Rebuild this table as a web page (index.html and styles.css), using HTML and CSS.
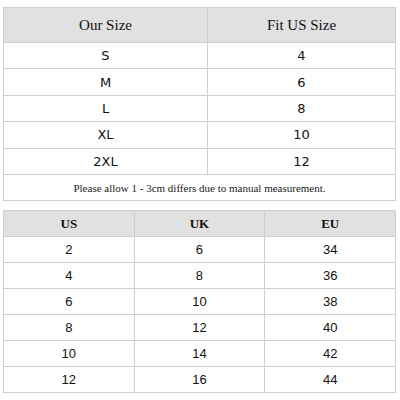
FILE: index.html
```html
<!DOCTYPE html>
<html>
<head>
<meta charset="utf-8">
<link rel="stylesheet" href="styles.css">
</head>
<body>
<div class="page">
  <table class="size-table first">
    <colgroup><col class="c1"><col></colgroup>
    <thead>
      <tr><th>Our Size</th><th>Fit US Size</th></tr>
    </thead>
    <tbody>
      <tr><td>S</td><td>4</td></tr>
      <tr><td>M</td><td>6</td></tr>
      <tr><td>L</td><td>8</td></tr>
      <tr><td>XL</td><td>10</td></tr>
      <tr><td>2XL</td><td>12</td></tr>
      <tr><td class="note" colspan="2">Please allow 1 - 3cm differs due to manual measurement.</td></tr>
    </tbody>
  </table>
  <table class="size-table second">
    <colgroup><col class="t"><col class="t"><col class="t"></colgroup>
    <thead>
      <tr><th>US</th><th>UK</th><th>EU</th></tr>
    </thead>
    <tbody>
      <tr><td>2</td><td>6</td><td>34</td></tr>
      <tr><td>4</td><td>8</td><td>36</td></tr>
      <tr><td>6</td><td>10</td><td>38</td></tr>
      <tr><td>8</td><td>12</td><td>40</td></tr>
      <tr><td>10</td><td>14</td><td>42</td></tr>
      <tr><td>12</td><td>16</td><td>44</td></tr>
    </tbody>
  </table>
</div>
</body>
</html>
```

FILE: styles.css
```css
html, body {
  margin: 0;
  padding: 0;
  background: #ffffff;
}

.page {
  padding: 7px 4px 0 3px;
  display: flex;
  flex-direction: column;
  gap: 9px;
}

.size-table {
  width: 393px;
  border-collapse: collapse;
  table-layout: fixed;
  color: #111;
}

.size-table th,
.size-table td {
  border: 1px solid #cfcfcf;
  text-align: center;
  padding: 0;
}

.size-table th {
  background: #e1e1e1;
  font-family: "Liberation Serif", serif;
}

.first .c1 {
  width: 204px;
}

.first th {
  height: 34px;
  font-size: 15px;
  font-weight: normal;
}

.first td {
  height: 25.4px;
  font-family: "DejaVu Sans", sans-serif;
  font-size: 13px;
}

.first td.note {
  font-family: "Liberation Serif", serif;
  font-size: 11px;
  color: #222;
}

.second th {
  height: 25px;
  font-size: 13px;
  font-weight: bold;
}

.second td {
  height: 25px;
  font-family: "Liberation Sans", sans-serif;
  font-size: 13px;
}
```
